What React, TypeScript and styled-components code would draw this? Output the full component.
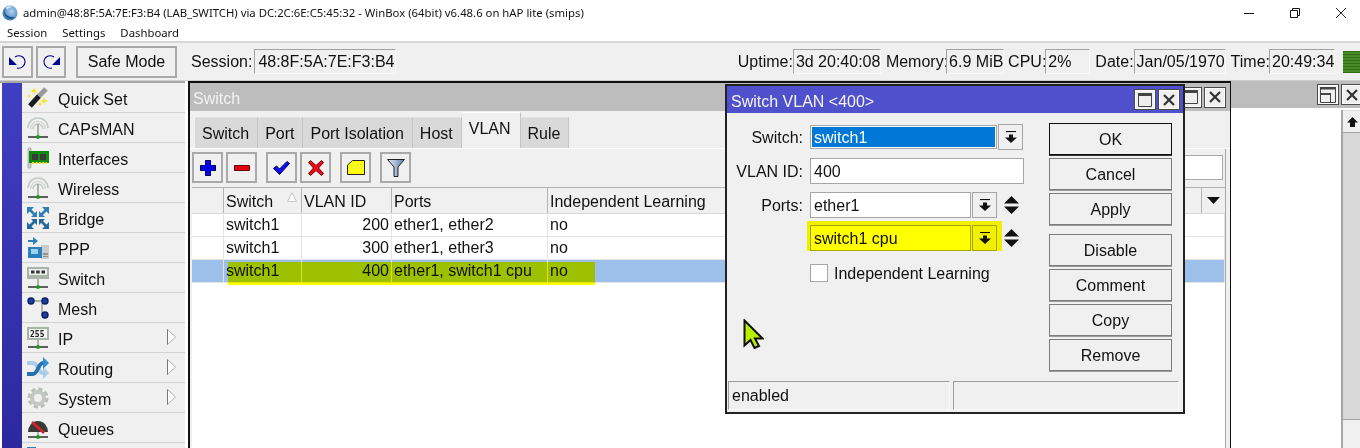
import { FC, ReactNode } from 'react';
import styled, { createGlobalStyle } from 'styled-components';

const GlobalStyle = createGlobalStyle`
  html, body {
    margin: 0;
    padding: 0;
    background: #fff;
  }
  body {
    font-family: "Liberation Sans", Arial, sans-serif;
    font-size: 16px;
    color: #111;
  }
  * {
    box-sizing: border-box;
  }
`;

const Page = styled.div`
  width: 1360px;
  height: 448px;
  overflow: hidden;
  display: flex;
  flex-direction: column;
`;

/* ---------- title + menu ---------- */

const TitleBar = styled.div`
  height: 25px;
  display: flex;
  align-items: center;
  padding-left: 2px;
  margin-right: -4px;
  font-family: "Noto Sans", sans-serif;
  font-size: 11.33px;
`;

const TitleText = styled.span`
  margin-left: 5px;
  white-space: nowrap;
`;

const WinControls = styled.div`
  margin-left: auto;
  display: flex;
`;

const WinControl = styled.div`
  width: 46px;
  height: 25px;
  display: flex;
  align-items: center;
  justify-content: center;
`;

const MenuBar = styled.div`
  height: 16px;
  display: flex;
  gap: 15px;
  padding-left: 7px;
  font-family: "Noto Sans", sans-serif;
  font-size: 11.33px;
  line-height: 16px;
`;

/* ---------- main toolbar ---------- */

const Toolbar = styled.div`
  height: 40px;
  flex: none;
  display: flex;
  align-items: center;
  padding-left: 2px;
  background: #f0f0f0;
  border-top: 2px solid #d6d6d6;
  border-bottom: 1px solid #cfcfcf;
`;

const ToolButton = styled.div<{ $w: number; $ml?: number }>`
  width: ${(p) => p.$w}px;
  height: 32px;
  margin-left: ${(p) => p.$ml ?? 0}px;
  display: flex;
  align-items: center;
  justify-content: center;
  background: #f0f0f0;
  border: 2px solid #a9a9a9;
`;

const BarLabel = styled.span<{ $ml?: number }>`
  margin-left: ${(p) => p.$ml ?? 0}px;
  white-space: nowrap;
`;

const ReadOut = styled.div<{ $w: number; $ml?: number; $pl?: number }>`
  width: ${(p) => p.$w}px;
  height: 25px;
  margin-left: ${(p) => p.$ml ?? 0}px;
  padding-left: ${(p) => p.$pl ?? 2}px;
  line-height: 23px;
  white-space: nowrap;
  background: #f0f0f0;
  border: 1px solid #f8f8f8;
  border-top-color: #a3a3a3;
  border-left-color: #a3a3a3;
`;

const StatusGroup = styled.div`
  margin-left: auto;
  display: flex;
  align-items: center;
`;

const Meter = styled.div`
  width: 17px;
  height: 22px;
  margin-left: 8px;
  background: repeating-linear-gradient(#2f6f14 0 1px, #4b8a28 1px 3px);
`;

/* ---------- workspace ---------- */

const Workspace = styled.div`
  flex: 1;
  display: flex;
  min-height: 0;
`;

const Sidebar = styled.div`
  width: 185px;
  flex: none;
  display: flex;
  padding-left: 2px;
  border-top: 2px solid #a8a8a8;
`;

const Strip = styled.div`
  width: 20px;
  background: linear-gradient(#403ec2, #2c299f);
`;

const MenuList = styled.div`
  flex: 1;
  background: #f0f0f0;
`;

const MenuRow = styled.div`
  position: relative;
  height: 30px;
  display: flex;
  align-items: center;
  gap: 9px;
  padding-left: 5px;
  border-bottom: 1px solid #d2d2d2;
`;

const MenuName = styled.span`
  margin-top: 4px;
`;

const MoreArrow = styled.div`
  position: absolute;
  left: 145px;
  top: 6px;
  display: flex;
`;

const Desktop = styled.div`
  position: relative;
  flex: 1;
  background: #fff;
`;

/* ---------- switch window ---------- */

const SwitchWindow = styled.div`
  position: absolute;
  left: 3px;
  top: 0;
  width: 1043px;
  height: 380px;
  display: flex;
  flex-direction: column;
  background: #f0f0f0;
  border: 2px solid #111;
  border-right-width: 1px;
`;

const GreyTitle = styled.div<{ $h: number; $pr: number }>`
  height: ${(p) => p.$h}px;
  flex: none;
  display: flex;
  align-items: center;
  justify-content: space-between;
  padding: 0 ${(p) => p.$pr}px 0 3px;
  color: #f2f2f2;
  background: #bdbdbd;
`;

const Caption = styled.span`
  margin-top: 4px;
`;

const TitleButtons = styled.div`
  display: flex;
  gap: 2px;
`;

const TitleButton = styled.div`
  width: 22px;
  height: 21px;
  display: flex;
  align-items: center;
  justify-content: center;
  background: #efefef;
  border: 1px solid #4a4a4a;
  box-shadow: inset 0 0 0 1px #fff;
`;

const Tabs = styled.div`
  height: 38px;
  flex: none;
  display: flex;
  align-items: flex-end;
  padding-left: 5px;
  border-bottom: 1px solid #fff;
`;

const Tab = styled.div<{ $active?: boolean }>`
  height: ${(p) => (p.$active ? 36 : 31)}px;
  padding: ${(p) => (p.$active ? '0 9px 4px 7px' : '2px 8px 0 7px')};
  display: flex;
  align-items: center;
  white-space: nowrap;
  background: ${(p) => (p.$active ? '#f0f0f0' : '#d9d9d9')};
  border-right: 1px solid #c4c4c4;
  border-top: 1px solid ${(p) => (p.$active ? '#fff' : '#e2e2e2')};
`;

const Pane = styled.div`
  flex: 1;
  min-height: 0;
  display: flex;
  flex-direction: column;
  padding: 3px 0 0 2px;
  margin-right: 4px;
  border-right: 1px solid #a8a8a8;
`;

const ActionBar = styled.div`
  height: 31px;
  flex: none;
  display: flex;
  align-items: center;
  padding-right: 2px;
`;

const ActionButton = styled.div<{ $ml?: number }>`
  width: 31px;
  height: 31px;
  margin-left: ${(p) => p.$ml ?? 0}px;
  display: flex;
  align-items: center;
  justify-content: center;
  border: 2px solid #a9a9a9;
`;

const SearchBox = styled.div`
  width: 300px;
  height: 25px;
  margin-left: auto;
  background: #fff;
  border: 1px solid #a9a9a9;
`;

const Table = styled.div`
  flex: 1;
  margin-top: 4px;
  background: #fff;
`;

const COLUMNS = '32px 78px 90px 156px';

const HeadRow = styled.div`
  height: 27px;
  display: grid;
  grid-template-columns: ${COLUMNS} 1fr 23px;
  background: #f0f0f0;
  border-top: 1px solid #b4b4b4;
  border-bottom: 1px solid #d8d8d8;
`;

const HeadCell = styled.div`
  position: relative;
  display: flex;
  align-items: center;
  padding: 2px 0 0 2px;
  white-space: nowrap;
  border-right: 1px solid #b4b4b4;
`;

const SortMark = styled.div`
  position: absolute;
  right: 4px;
  top: 4px;
  display: flex;
`;

const MenuDrop = styled.div`
  display: flex;
  align-items: center;
  justify-content: center;
`;

const DataRow = styled.div<{ $selected?: boolean }>`
  position: relative;
  height: 23px;
  display: grid;
  grid-template-columns: ${COLUMNS} 1fr;
  background: ${(p) => (p.$selected ? '#9dc0ea' : '#fff')};
  border-bottom: 1px solid #e4e4e4;
`;

const DataCell = styled.div<{ $right?: boolean }>`
  padding: 0 2px;
  line-height: 21px;
  white-space: nowrap;
  text-align: ${(p) => (p.$right ? 'right' : 'left')};
  border-right: 1px solid #e4e4e4;
`;

/* highlighter pen laid over the shot */
const Marker = styled.div<{ $l: number; $t: number; $w: number; $h: number }>`
  position: absolute;
  left: ${(p) => p.$l}px;
  top: ${(p) => p.$t}px;
  width: ${(p) => p.$w}px;
  height: ${(p) => p.$h}px;
  background: #ffff00;
  mix-blend-mode: multiply;
  pointer-events: none;
`;

/* ---------- panel at the right ---------- */

const SidePanel = styled.div`
  position: absolute;
  left: 1046px;
  right: -8px;
  top: 0;
  bottom: 0;
  display: flex;
  flex-direction: column;
`;

const SideBody = styled.div`
  flex: 1;
  display: flex;
  justify-content: flex-end;
  padding-top: 2px;
  background: #fff;
`;

const ScrollColumn = styled.div`
  width: 27px;
  display: flex;
  flex-direction: column;
  border-left: 2px solid #a6a6a6;
`;

const ScrollButton = styled.div`
  height: 23px;
  flex: none;
  display: flex;
  align-items: center;
  justify-content: center;
  padding-right: 6px;
  background: #f0f0f0;
  border-top: 1px solid #dcdcdc;
  border-bottom: 1px solid #a6a6a6;
`;

const ScrollTrack = styled.div`
  height: 287px;
  flex: none;
  background: #d8d8d8;
  border-bottom: 1px solid #a6a6a6;
`;

const ScrollRest = styled.div`
  flex: 1;
  background: #f0f0f0;
`;

/* ---------- dialog ---------- */

const Dialog = styled.div`
  position: absolute;
  z-index: 2;
  left: 540px;
  top: 3px;
  width: 460px;
  height: 330px;
  display: flex;
  flex-direction: column;
  background: #f0f0f0;
  border: 2px solid #222;
`;

const DialogTitle = styled.div`
  height: 27px;
  flex: none;
  display: flex;
  align-items: center;
  justify-content: space-between;
  padding: 0 3px 0 4px;
  color: #f4f4f4;
  background: #4f50cb;
`;

const DialogBody = styled.div`
  height: 268px;
  display: flex;
  padding: 10px 11px 0 0;
`;

const Form = styled.div`
  width: 322px;
  display: flex;
  flex-direction: column;
  padding-top: 1px;
`;

const FieldRow = styled.div<{ $mt?: number }>`
  position: relative;
  height: 26px;
  margin-top: ${(p) => p.$mt ?? 0}px;
  display: grid;
  grid-template-columns: 76px auto;
  column-gap: 7px;
  justify-content: start;
  align-items: center;
`;

const FieldLabel = styled.div`
  padding-top: 2px;
  text-align: right;
`;

const Controls = styled.div`
  display: flex;
  align-items: center;
  gap: 1px;
`;

const Input = styled.div<{ $w: number; $h?: number; $focus?: boolean }>`
  width: ${(p) => p.$w}px;
  height: ${(p) => p.$h ?? 26}px;
  padding-left: 3px;
  line-height: ${(p) => (p.$h ?? 26) - 1}px;
  white-space: nowrap;
  color: ${(p) => (p.$focus ? '#fff' : '#111')};
  background: ${(p) => (p.$focus ? '#0078d7' : '#fff')};
  border: 1px solid #a6a6a6;
  box-shadow: ${(p) => (p.$focus ? 'inset 0 0 0 1px #fff' : 'none')};
`;

const DropButton = styled.div`
  width: 25px;
  height: 26px;
  display: flex;
  align-items: center;
  justify-content: center;
  background: #f0f0f0;
  border: 1px solid #a6a6a6;
`;

const UpDown = styled.div`
  width: 15px;
  margin-left: 6px;
  display: flex;
`;

const CheckRow = styled.div`
  display: flex;
  align-items: center;
  gap: 6px;
  margin: 12px 0 0 83px;
`;

const CheckBox = styled.div`
  width: 18px;
  height: 18px;
  background: #fff;
  border: 1px solid #a6a6a6;
`;

const CheckLabel = styled.span`
  padding-top: 2px;
`;

const ButtonColumn = styled.div`
  width: 123px;
  margin-left: auto;
  display: flex;
  flex-direction: column;
  gap: 3px;
`;

const DialogButton = styled.div<{ $primary?: boolean; $mt?: number }>`
  height: 32px;
  margin-top: ${(p) => p.$mt ?? 0}px;
  padding-top: 2px;
  display: flex;
  align-items: center;
  justify-content: center;
  background: #f0f0f0;
  border: 1px solid ${(p) => (p.$primary ? '#111' : '#7d7d7d')};
  box-shadow: 0 1px 0 ${(p) => (p.$primary ? '#333' : '#9a9a9a')};
`;

const StatusBar = styled.div`
  height: 28px;
  display: grid;
  grid-template-columns: 222px 226px;
  column-gap: 3px;
  padding-left: 1px;
`;

const StatusCell = styled.div`
  padding-left: 3px;
  line-height: 27px;
  border-top: 1px solid #9c9c9c;
  border-left: 1px solid #9c9c9c;
  border-right: 1px solid #fafafa;
  border-bottom: 1px solid #fafafa;
`;

const Cursor = styled.svg`
  position: absolute;
  z-index: 3;
  left: 558px;
  top: 238px;
`;

/* ---------- drawn icons ---------- */

const Svg: FC<{ w?: number; h?: number; children: ReactNode }> = ({ w = 22, h = 22, children }) => (
  <svg width={w} height={h} viewBox={`0 0 ${w} ${h}`} style={{ flex: 'none', display: 'block' }}>
    {children}
  </svg>
);

const Base = () => (
  <>
    <path d="M1 20h20" stroke="#3a3a3a" strokeWidth="1.6" />
    <circle cx="11" cy="20" r="2" fill="#1c9a1c" />
  </>
);

const AntennaIcon = () => (
  <Svg>
    <path d="M1 11a10 10 0 0 1 20 0" fill="none" stroke="#c4cbc4" strokeWidth="1.6" />
    <path d="M3.500 12a7.500 7.500 0 0 1 15 0" fill="none" stroke="#d8dcd8" strokeWidth="1.6" />
    <path d="M6 12a5 5 0 0 1 10 0" fill="none" stroke="#c4cbc4" strokeWidth="1.4" />
    <path d="M11 7v13" stroke="#8f9a8f" strokeWidth="1.4" />
    <Base />
  </Svg>
);

const WandIcon = () => (
  <Svg>
    <path d="M3 19L12 9" stroke="#1b1b1b" strokeWidth="5" />
    <path d="M12 9L19 2" stroke="#9a9a9a" strokeWidth="5" />
    <g fill="#f4e51c">
      <path d="M7 0l1 3 3 1-3 1-1 3-1-3-3-1 3-1z" />
      <path d="M2 7l.8 1.4L4 9l-1.2.6L2 11l-.8-1.4L0 9l1.2-.6z" />
      <path d="M17 10l1 3 3 1-3 1-1 3-1-3-3-1 3-1z" />
      <path d="M13 15l.8 1.4L15 17l-1.2.6L13 19l-.8-1.4L11 17l1.2-.6z" />
    </g>
  </Svg>
);

const CardIcon = () => (
  <Svg>
    <path d="M1 1h3v20H1z" fill="#c4cbc4" stroke="#9aa29a" strokeWidth=".6" />
    <path d="M2 4h20v12H2z" fill="#0c8a0c" />
    <path d="M5 7h6v6H5zM13 7h6v6h-6z" fill="#3a3a3a" />
    <path d="M5 16h15" stroke="#f2dc2a" strokeWidth="2" strokeDasharray="2 1.4" />
  </Svg>
);

const BridgeIcon = () => (
  <Svg>
    <g stroke="#2f7fb6" strokeWidth="2.6">
      <path d="M3 3l6 6M19 3l-6 6" />
      <path d="M3 19l6-6M19 19l-6-6" stroke="#24689c" />
    </g>
    <g fill="#2f7fb6">
      <path d="M0 0h7L0 7zM22 0h-7l7 7z" />
      <path d="M10 10H4l6-6zM12 10h6l-6-6z" />
    </g>
    <g fill="#24689c">
      <path d="M0 22h7l-7-7zM22 22h-7l7-7z" />
      <path d="M10 12H4l6 6zM12 12h6l-6 6z" />
    </g>
  </Svg>
);

const PppIcon = () => (
  <Svg>
    <path d="M14 8h8v14h-8z" fill="#c9cdc9" />
    <path d="M16 16h5v2h-5zM16 19h5v1h-5z" fill="#8e948e" />
    <path d="M1 10h14v11H1z" fill="#2b80bb" />
    <path d="M4 12h7v5H4z" fill="#9fd0ee" />
    <path d="M1 4h6" stroke="#2b80bb" strokeWidth="2" />
    <path d="M6 0l5 4-5 4z" fill="#2b80bb" />
  </Svg>
);

const SwitchIcon = () => (
  <Svg>
    <path d="M0 0h22v12H0z" fill="#a8b4a8" />
    <path d="M2 2h18v6H2z" fill="#eef0ee" />
    <path d="M4 3.500h3.500v3H4zM9.200 3.500h3.500v3H9.200zM14.500 3.500H18v3h-3.500z" fill="#333" />
    <path d="M11 12v8" stroke="#8f9a8f" strokeWidth="1.4" />
    <Base />
  </Svg>
);

const MeshIcon = () => (
  <Svg>
    <path d="M15 4v14M6 4h9" fill="none" stroke="#a8b4a8" strokeWidth="1.8" />
    <g fill="#1c3f9e" stroke="#0b1d66" strokeWidth="1.4">
      <circle cx="4" cy="4" r="3" />
      <circle cx="18" cy="4" r="3" />
      <circle cx="18" cy="18" r="3" />
    </g>
  </Svg>
);

const IpGlyph = styled.text`
  font-family: "DejaVu Sans Mono", monospace;
  font-size: 8px;
  font-weight: 700;
  fill: #222;
`;

const IpIcon = () => (
  <Svg>
    <path d="M0 0h22v13H0z" fill="#a8b4a8" />
    <path d="M2 2h18v9H2z" fill="#f4f6f4" />
    <IpGlyph x="3" y="9.500">255</IpGlyph>
    <path d="M11 13v7" stroke="#8f9a8f" strokeWidth="1.4" />
    <Base />
  </Svg>
);

const RoutingIcon = () => (
  <Svg>
    <path d="M0 6h6c5 0 5 10 10 10h1" fill="none" stroke="#a9cdea" strokeWidth="4" />
    <path d="M16 10l6 6-6 6z" fill="#a9cdea" />
    <path d="M0 17h6c5 0 5-11 10-11h1" fill="none" stroke="#2a6fae" strokeWidth="4" />
    <path d="M16 0l6 6-6 6z" fill="#2f8fd6" />
  </Svg>
);

const GearIcon = () => (
  <Svg>
    <circle cx="11" cy="11" r="8.500" fill="none" stroke="#b7bfb7" strokeWidth="4" strokeDasharray="4 2.670" />
    <circle cx="11" cy="11" r="6" fill="none" stroke="#c2c9c2" strokeWidth="4" />
  </Svg>
);

const QueueIcon = () => (
  <Svg>
    <path d="M1 15a10 11 0 0 1 20 0z" fill="#3a3a3a" />
    <path d="M5 5l12 11" stroke="#d8232a" strokeWidth="2.600" />
    <path d="M11 15v5" stroke="#8f9a8f" strokeWidth="1.4" />
    <Base />
  </Svg>
);

const FilesIcon = () => (
  <Svg>
    <path d="M0 0h9v3H0z" fill="#2f7fb6" />
  </Svg>
);

const UndoIcon: FC<{ flip?: boolean }> = ({ flip }) => (
  <svg width="18" height="16" viewBox="0 0 18 16" style={{ transform: flip ? 'scaleX(-1)' : undefined }}>
    <path d="M6 3C11 0 16 3 16 8 16 12 12 15 8 14" fill="none" stroke="#00008f" strokeWidth="1.100" />
    <path d="M0 3v8h8z" fill="#00008f" />
  </svg>
);

const CloseGlyph = () => (
  <svg width="12" height="12" viewBox="0 0 12 12">
    <path d="M1 1l10 10M11 1L1 11" stroke="#333" strokeWidth="2.200" />
  </svg>
);

const MaxGlyph = () => (
  <svg width="14" height="14" viewBox="0 0 14 14">
    <path d="M.5.500h13v13H.5z" fill="none" stroke="#444" />
    <path d="M0 0h14v3H0z" fill="#444" />
  </svg>
);

const RestoreGlyph = () => (
  <svg width="16" height="16" viewBox="0 0 16 16">
    <path d="M.5.500h15v15H.5zM.5 6.500h10v9" fill="none" stroke="#444" />
    <path d="M0 0h16v2.500H0zM0 6h11v2H0z" fill="#444" />
  </svg>
);

const DropGlyph = () => (
  <svg width="12" height="13" viewBox="0 0 12 13">
    <path d="M1 .500h10" stroke="#111" strokeWidth="1.200" />
    <path d="M4 3.500h4v3h4L6 12 0 6.500h4z" fill="#111" />
  </svg>
);

const UpDownGlyph = () => (
  <svg width="15" height="18" viewBox="0 0 15 18">
    <path d="M7.500 0L15 7.500H0zM0 10.500h15L7.500 18z" fill="#111" />
  </svg>
);

const MoreGlyph = () => (
  <svg width="9" height="16" viewBox="0 0 9 16">
    <path d="M.5.500L8.500 8 .5 15.500z" fill="#fff" stroke="#b0b0b0" />
    <path d="M.5.500v15" stroke="#777" />
  </svg>
);

const SortGlyph = () => (
  <svg width="10" height="10" viewBox="0 0 10 10">
    <path d="M5 .500L9.500 9.500H.5z" fill="#fafafa" stroke="#c8c8c8" />
  </svg>
);

const DownTriangle = () => (
  <svg width="13" height="7" viewBox="0 0 13 7">
    <path d="M0 0h13L6.500 7z" fill="#111" />
  </svg>
);

const UpArrow = () => (
  <svg width="11" height="10" viewBox="0 0 11 10">
    <path d="M5.500 0L11 5.500H8V10H3V5.500H0z" fill="#111" />
  </svg>
);

const PlusIcon = () => (
  <svg width="16" height="16" viewBox="0 0 16 16">
    <path d="M5.500.500h5v5h5v5h-5v5h-5v-5h-5v-5h5z" fill="#0000f5" stroke="#00005a" />
  </svg>
);

const MinusIcon = () => (
  <svg width="16" height="6" viewBox="0 0 16 6">
    <path d="M.5.500h15v5H.5z" fill="#e8000c" stroke="#600" />
  </svg>
);

const CheckIcon = () => (
  <svg width="17" height="14" viewBox="0 0 17 14">
    <path d="M.5 7.500L3.500 5l3 3L14 .5l2.500 2L6.500 13.500z" fill="#0a0af0" stroke="#00005a" />
  </svg>
);

const CrossIcon = () => (
  <svg width="16" height="16" viewBox="0 0 16 16">
    <path d="M2.500.500L8 5.500 13.500.500l2 2L10.500 8l5 5.500-2 2L8 10.500l-5.500 5-2-2L5.500 8l-5-5.500z" fill="#f00a14" stroke="#600" />
  </svg>
);

const NoteIcon = () => (
  <svg width="18" height="15" viewBox="0 0 18 15">
    <path d="M5.500.500h12v14H.5V5z" fill="#ffff00" stroke="#222" />
    <path d="M7 5h8M5 8h10" stroke="#d8d8a0" strokeDasharray="2 1" />
  </svg>
);

const FunnelIcon = () => (
  <svg width="18" height="18" viewBox="0 0 18 18">
    <defs>
      <linearGradient id="funnel" x1="0" x2="1">
        <stop offset="0" stopColor="#e8eef6" />
        <stop offset="1" stopColor="#5f7fb0" />
      </linearGradient>
    </defs>
    <path d="M.5.500h17L11 8v9.500H7V8z" fill="url(#funnel)" stroke="#222" />
  </svg>
);

const LogoIcon = () => (
  <svg width="16" height="16" viewBox="0 0 16 16">
    <defs>
      <radialGradient id="logo" cx=".6" cy=".4" r=".7">
        <stop offset="0" stopColor="#b4d6f0" />
        <stop offset="1" stopColor="#2a6cae" />
      </radialGradient>
    </defs>
    <circle cx="8" cy="8" r="7.500" fill="url(#logo)" />
    <path d="M2 4c0 6 5 9 11 8-4 4-12 1-11-8z" fill="#134a85" />
    <path d="M4 2c2-1 5-1 7 0-3 0-5 1-6 3z" fill="#fff" opacity=".8" />
  </svg>
);

const menuItems: { name?: string; icon: ReactNode; more?: boolean }[] = [
  { name: 'Quick Set', icon: <WandIcon /> },
  { name: 'CAPsMAN', icon: <AntennaIcon /> },
  { name: 'Interfaces', icon: <CardIcon /> },
  { name: 'Wireless', icon: <AntennaIcon /> },
  { name: 'Bridge', icon: <BridgeIcon /> },
  { name: 'PPP', icon: <PppIcon /> },
  { name: 'Switch', icon: <SwitchIcon /> },
  { name: 'Mesh', icon: <MeshIcon /> },
  { name: 'IP', icon: <IpIcon />, more: true },
  { name: 'Routing', icon: <RoutingIcon />, more: true },
  { name: 'System', icon: <GearIcon />, more: true },
  { name: 'Queues', icon: <QueueIcon /> },
  { icon: <FilesIcon /> },
];

const tabs = ['Switch', 'Port', 'Port Isolation', 'Host', 'VLAN', 'Rule'];

const vlans = [
  { id: 200, ports: 'ether1, ether2' },
  { id: 300, ports: 'ether1, ether3' },
  { id: 400, ports: 'ether1, switch1 cpu', selected: true },
];

const readouts = [
  { label: 'Uptime:', value: '3d 20:40:08', w: 88 },
  { label: 'Memory:', value: '6.9 MiB', w: 58, ml: 5, shift: -2 },
  { label: 'CPU:', value: '2%', w: 45, ml: 4, shift: -1 },
  { label: 'Date:', value: 'Jan/05/1970', w: 92, ml: 5 },
  { label: 'Time:', value: '20:49:34', w: 66, ml: 5, shift: -1 },
];

export default function App() {
  return (
    <>
      <GlobalStyle />
      <Page>
        <TitleBar>
          <LogoIcon />
          <TitleText>
            admin@48:8F:5A:7E:F3:B4 (LAB_SWITCH) via DC:2C:6E:C5:45:32 - WinBox (64bit) v6.48.6 on hAP lite (smips)
          </TitleText>
          <WinControls>
            <WinControl>
              <svg width="10" height="10" viewBox="0 0 10 10">
                <path d="M0 5.500h10" stroke="#111" />
              </svg>
            </WinControl>
            <WinControl>
              <svg width="10" height="10" viewBox="0 0 10 10">
                <path d="M.5 2.500h7v7h-7zM2.500 2.500v-2h7v7h-2" fill="none" stroke="#111" />
              </svg>
            </WinControl>
            <WinControl>
              <svg width="10" height="10" viewBox="0 0 10 10">
                <path d="M0 0l10 10M10 0L0 10" stroke="#111" strokeWidth=".9" />
              </svg>
            </WinControl>
          </WinControls>
        </TitleBar>

        <MenuBar>
          <span>Session</span>
          <span>Settings</span>
          <span>Dashboard</span>
        </MenuBar>

        <Toolbar>
          <ToolButton $w={31}>
            <UndoIcon />
          </ToolButton>
          <ToolButton $w={30} $ml={3}>
            <UndoIcon flip />
          </ToolButton>
          <ToolButton $w={101} $ml={10}>
            Safe Mode
          </ToolButton>
          <BarLabel $ml={14}>Session:</BarLabel>
          <ReadOut $w={142} $ml={2} $pl={3}>
            48:8F:5A:7E:F3:B4
          </ReadOut>
          <StatusGroup>
            {readouts.map((r) => (
              <StatusGroup key={r.label}>
                <BarLabel $ml={r.ml}>{r.label}</BarLabel>
                <ReadOut $w={r.w} $ml={r.shift}>
                  {r.value}
                </ReadOut>
              </StatusGroup>
            ))}
            <Meter />
          </StatusGroup>
        </Toolbar>

        <Workspace>
          <Sidebar>
            <Strip />
            <MenuList>
              {menuItems.map((item, i) => (
                <MenuRow key={i}>
                  {item.icon}
                  {item.name && <MenuName>{item.name}</MenuName>}
                  {item.more && (
                    <MoreArrow>
                      <MoreGlyph />
                    </MoreArrow>
                  )}
                </MenuRow>
              ))}
            </MenuList>
          </Sidebar>

          <Desktop>
            <SwitchWindow>
              <GreyTitle $h={28} $pr={4}>
                <Caption>Switch</Caption>
                <TitleButtons>
                  <TitleButton>
                    <MaxGlyph />
                  </TitleButton>
                  <TitleButton>
                    <CloseGlyph />
                  </TitleButton>
                </TitleButtons>
              </GreyTitle>
              <Tabs>
                {tabs.map((t) => (
                  <Tab key={t} $active={t === 'VLAN'}>
                    {t}
                  </Tab>
                ))}
              </Tabs>
              <Pane>
                <ActionBar>
                  <ActionButton>
                    <PlusIcon />
                  </ActionButton>
                  <ActionButton $ml={3}>
                    <MinusIcon />
                  </ActionButton>
                  <ActionButton $ml={9}>
                    <CheckIcon />
                  </ActionButton>
                  <ActionButton $ml={3}>
                    <CrossIcon />
                  </ActionButton>
                  <ActionButton $ml={9}>
                    <NoteIcon />
                  </ActionButton>
                  <ActionButton $ml={9}>
                    <FunnelIcon />
                  </ActionButton>
                  <SearchBox />
                </ActionBar>
                <Table>
                  <HeadRow>
                    <HeadCell />
                    <HeadCell>
                      Switch
                      <SortMark>
                        <SortGlyph />
                      </SortMark>
                    </HeadCell>
                    <HeadCell>VLAN ID</HeadCell>
                    <HeadCell>Ports</HeadCell>
                    <HeadCell>Independent Learning</HeadCell>
                    <MenuDrop>
                      <DownTriangle />
                    </MenuDrop>
                  </HeadRow>
                  {vlans.map((v) => (
                    <DataRow key={v.id} $selected={v.selected}>
                      <DataCell />
                      <DataCell>switch1</DataCell>
                      <DataCell $right>{v.id}</DataCell>
                      <DataCell>{v.ports}</DataCell>
                      <DataCell>no</DataCell>
                      {v.selected && <Marker $l={36} $t={2} $w={367} $h={23} />}
                    </DataRow>
                  ))}
                </Table>
              </Pane>
            </SwitchWindow>

            <SidePanel>
              <GreyTitle $h={27} $pr={5}>
                <span />
                <TitleButtons>
                  <TitleButton>
                    <RestoreGlyph />
                  </TitleButton>
                  <TitleButton>
                    <CloseGlyph />
                  </TitleButton>
                </TitleButtons>
              </GreyTitle>
              <SideBody>
                <ScrollColumn>
                  <ScrollButton>
                    <UpArrow />
                  </ScrollButton>
                  <ScrollTrack />
                  <ScrollRest />
                </ScrollColumn>
              </SideBody>
            </SidePanel>

            <Dialog>
              <DialogTitle>
                <Caption>Switch VLAN &lt;400&gt;</Caption>
                <TitleButtons>
                  <TitleButton>
                    <MaxGlyph />
                  </TitleButton>
                  <TitleButton>
                    <CloseGlyph />
                  </TitleButton>
                </TitleButtons>
              </DialogTitle>
              <DialogBody>
                <Form>
                  <FieldRow>
                    <FieldLabel>Switch:</FieldLabel>
                    <Controls>
                      <Input $w={187} $h={24} $focus>
                        switch1
                      </Input>
                      <DropButton>
                        <DropGlyph />
                      </DropButton>
                    </Controls>
                  </FieldRow>
                  <FieldRow $mt={8}>
                    <FieldLabel>VLAN ID:</FieldLabel>
                    <Controls>
                      <Input $w={214}>400</Input>
                    </Controls>
                  </FieldRow>
                  <FieldRow $mt={8}>
                    <FieldLabel>Ports:</FieldLabel>
                    <Controls>
                      <Input $w={161}>ether1</Input>
                      <DropButton>
                        <DropGlyph />
                      </DropButton>
                      <UpDown>
                        <UpDownGlyph />
                      </UpDown>
                    </Controls>
                  </FieldRow>
                  <FieldRow $mt={7}>
                    <span />
                    <Controls>
                      <Input $w={161}>switch1 cpu</Input>
                      <DropButton>
                        <DropGlyph />
                      </DropButton>
                      <UpDown>
                        <UpDownGlyph />
                      </UpDown>
                    </Controls>
                    <Marker $l={80} $t={-4} $w={195} $h={30} />
                  </FieldRow>
                  <CheckRow>
                    <CheckBox />
                    <CheckLabel>Independent Learning</CheckLabel>
                  </CheckRow>
                </Form>
                <ButtonColumn>
                  <DialogButton $primary>OK</DialogButton>
                  <DialogButton>Cancel</DialogButton>
                  <DialogButton>Apply</DialogButton>
                  <DialogButton $mt={6}>Disable</DialogButton>
                  <DialogButton>Comment</DialogButton>
                  <DialogButton>Copy</DialogButton>
                  <DialogButton>Remove</DialogButton>
                </ButtonColumn>
              </DialogBody>
              <StatusBar>
                <StatusCell>enabled</StatusCell>
                <StatusCell />
              </StatusBar>
            </Dialog>

            <Cursor width="21" height="30" viewBox="0 0 21 30">
              <path d="M1.500 1.500v25l6-5.500 4 8 4.500-2-4-7.500h7.500z" fill="#b8f000" stroke="#111" strokeWidth="2" strokeLinejoin="miter" />
            </Cursor>
          </Desktop>
        </Workspace>
      </Page>
    </>
  );
}
